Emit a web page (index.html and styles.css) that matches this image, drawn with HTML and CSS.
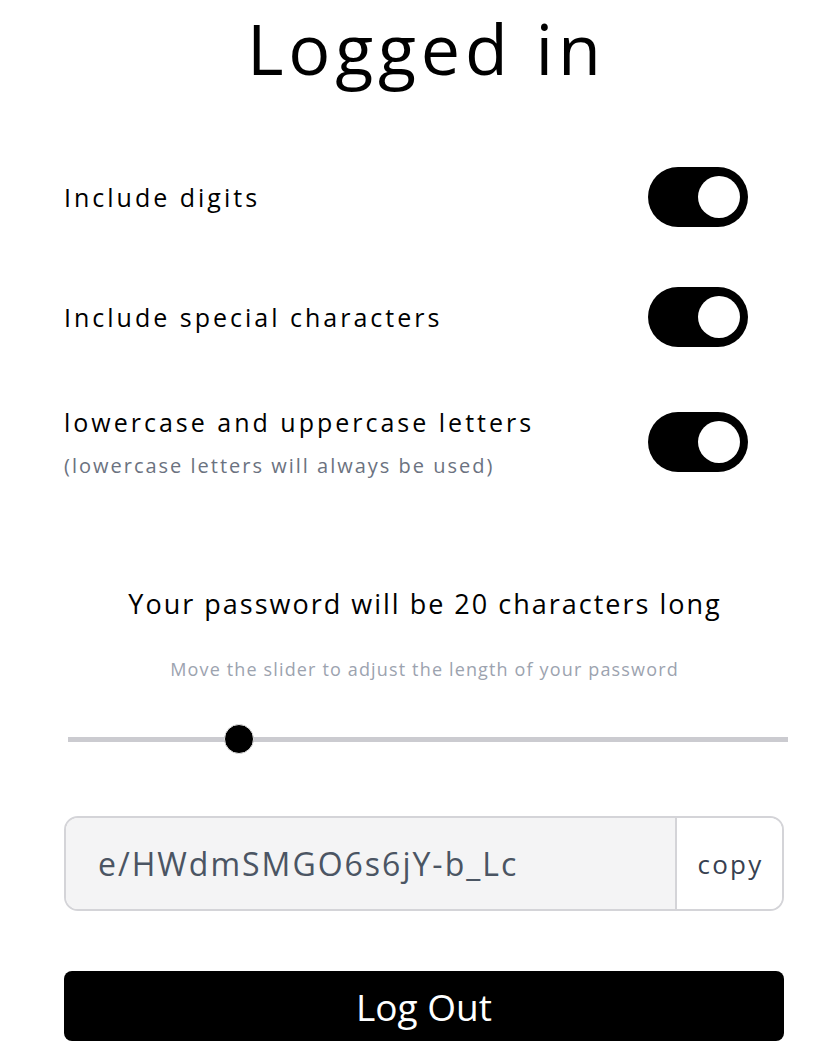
FILE: index.html
```html
<!DOCTYPE html>
<html lang="en">
<head>
<meta charset="utf-8">
<title>Logged in</title>
<link rel="stylesheet" href="styles.css">
</head>
<body>
<main class="page">
  <h1 class="title">Logged in</h1>

  <section class="options">
    <div class="option">
      <div class="option-text">
        <span class="option-label">Include digits</span>
      </div>
      <span class="toggle"><span class="knob"></span></span>
    </div>
    <div class="option">
      <div class="option-text">
        <span class="option-label">Include special characters</span>
      </div>
      <span class="toggle"><span class="knob"></span></span>
    </div>
    <div class="option option-double">
      <div class="option-text">
        <span class="option-label">lowercase and uppercase letters</span>
        <span class="option-hint">(lowercase letters will always be used)</span>
      </div>
      <span class="toggle"><span class="knob"></span></span>
    </div>
  </section>

  <section class="length">
    <p class="length-title">Your password will be 20 characters long</p>
    <p class="length-hint">Move the slider to adjust the length of your password</p>
    <input class="slider" type="range" min="0" max="100" step="any" value="22.6" aria-label="Password length">
  </section>

  <div class="result">
    <div class="result-value">e/HWdmSMGO6s6jY-b_Lc</div>
    <button class="copy" type="button">copy</button>
  </div>

  <button class="logout" type="button">Log Out</button>
</main>
</body>
</html>
```

FILE: styles.css
```css
* { box-sizing: border-box; }

html, body {
  margin: 0;
  padding: 0;
  background: #ffffff;
}

body {
  font-family: "Open Sans", "Noto Sans", sans-serif;
  color: #000000;
}

.page {
  width: 720px;
  margin-left: 64px;
  display: flex;
  flex-direction: column;
}

.title {
  margin: 0;
  font-size: 70px;
  font-weight: 400;
  line-height: 96px;
  text-align: center;
  letter-spacing: 4.8px;
  text-indent: 4.8px;
}

.options {
  display: flex;
  flex-direction: column;
  margin-top: 71px;
}

.option {
  display: flex;
  align-items: center;
  justify-content: space-between;
  height: 60px;
}

.option + .option {
  margin-top: 60px;
}

.option-double {
  height: 72px;
}

.option + .option-double {
  margin-top: 59px;
}

.option-text {
  display: flex;
  flex-direction: column;
}

.option-label {
  font-size: 25px;
  line-height: 34px;
  letter-spacing: 3px;
}

.option-hint {
  font-size: 20px;
  line-height: 28px;
  letter-spacing: 2px;
  color: #6b7280;
  margin-top: 13px;
}

.toggle {
  width: 100px;
  height: 60px;
  margin-right: 36px;
  border-radius: 30px;
  background: #000000;
  display: flex;
  align-items: center;
  justify-content: flex-end;
  padding-right: 8px;
}

.knob {
  width: 42px;
  height: 42px;
  border-radius: 50%;
  background: #ffffff;
}

.length {
  display: flex;
  flex-direction: column;
  align-items: center;
  margin-top: 108px;
}

.length-title {
  margin: 0;
  font-size: 27px;
  line-height: 36px;
  letter-spacing: 2px;
  text-indent: 2px;
}

.length-hint {
  margin: 35px 0 0;
  font-size: 18px;
  line-height: 24px;
  letter-spacing: 1.15px;
  text-indent: 1px;
  color: #9ca3af;
}

.slider {
  -webkit-appearance: none;
  appearance: none;
  width: 720px;
  height: 30px;
  margin: 43px 0 0 8px;
  padding: 0;
  background: transparent;
}

.slider::-webkit-slider-runnable-track {
  height: 5px;
  background: #cbcbd0;
  border: none;
}

.slider::-webkit-slider-thumb {
  -webkit-appearance: none;
  appearance: none;
  width: 30px;
  height: 30px;
  margin-top: -12.5px;
  border-radius: 50%;
  background: #000000;
  border: 1px solid #e5e5e5;
}

.result {
  display: flex;
  height: 95px;
  margin-top: 62px;
  border: 2px solid #d4d4d8;
  border-radius: 14px;
  overflow: hidden;
}

.result-value {
  flex: 1;
  display: flex;
  align-items: center;
  padding-left: 32px;
  background: #f4f4f5;
  color: #4b5563;
  font-size: 32px;
  letter-spacing: 2px;
}

.copy {
  width: 107px;
  border: none;
  border-left: 2px solid #d4d4d8;
  background: #ffffff;
  color: #374151;
  font-family: inherit;
  font-size: 26px;
  letter-spacing: 2.2px;
  text-indent: 2px;
  padding: 0;
}

.logout {
  margin-top: 60px;
  height: 70px;
  border: none;
  border-radius: 8px;
  background: #000000;
  color: #ffffff;
  font-family: inherit;
  font-size: 37px;
  padding: 0;
}
```
